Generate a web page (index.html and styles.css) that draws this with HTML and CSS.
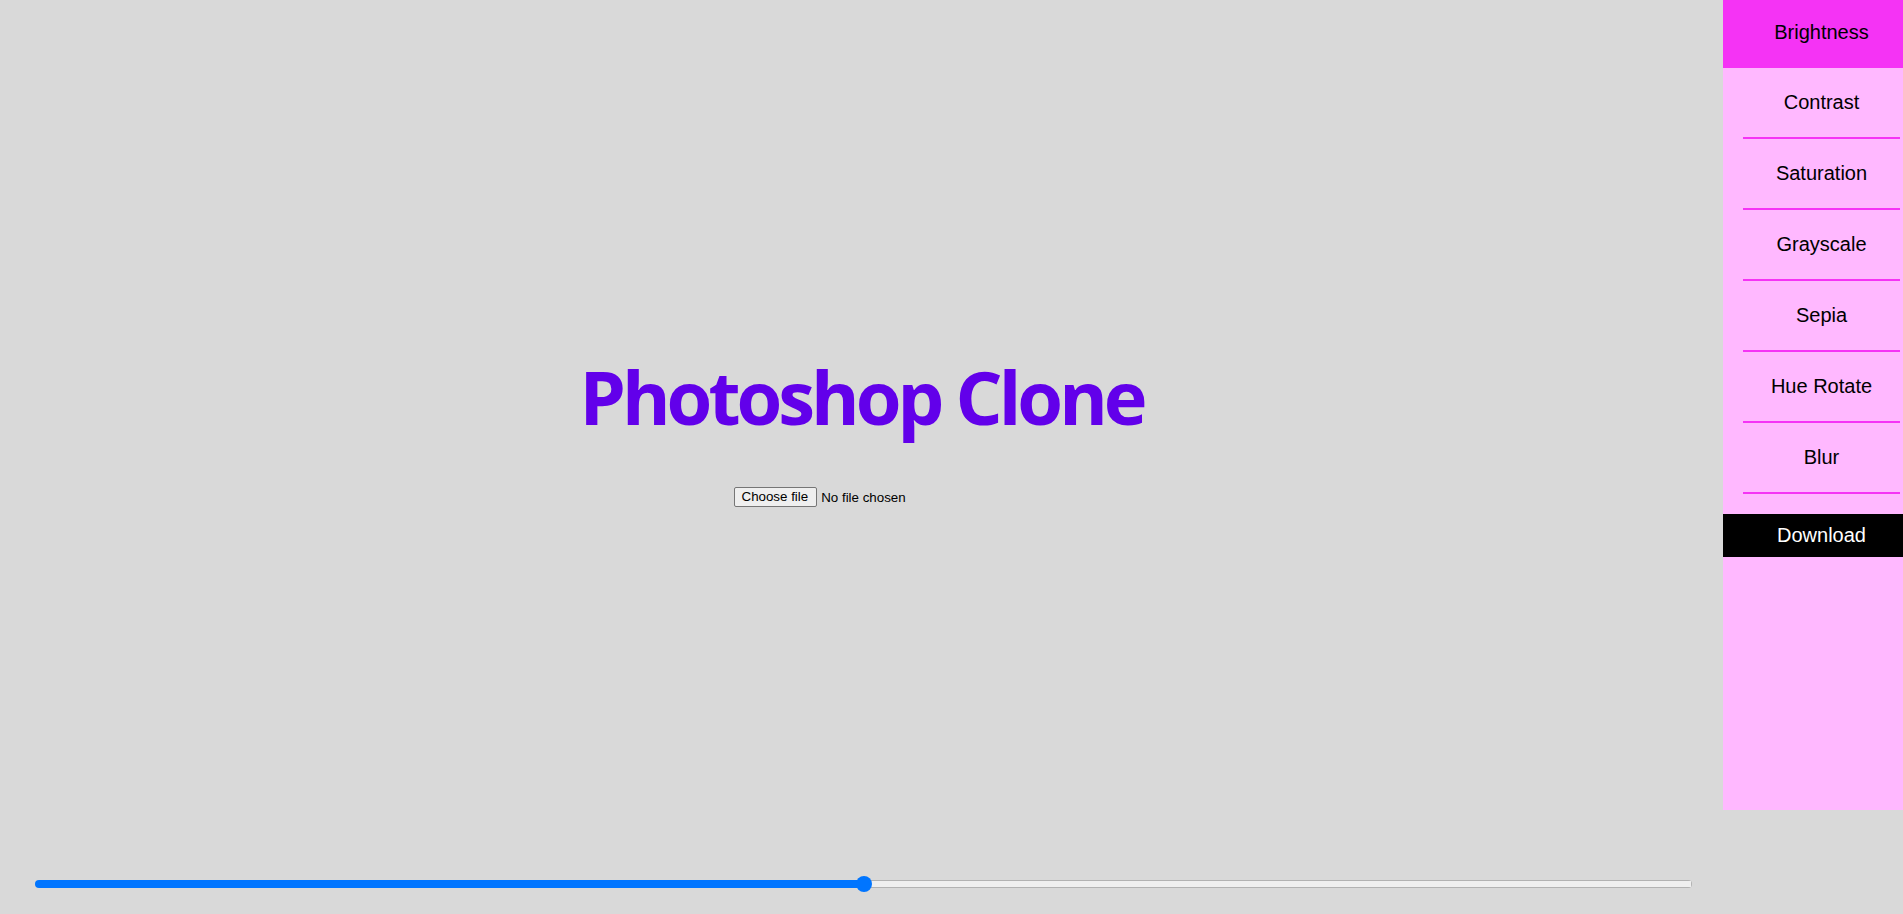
FILE: index.html
```html
<!DOCTYPE html>
<html lang="en">
<head>
<meta charset="utf-8">
<title>Photoshop Clone</title>
<link rel="stylesheet" href="styles.css">
</head>
<body>
<div class="app">
  <div class="workspace">
    <main class="canvas-area">
      <h1 class="title">Photoshop Clone</h1>
      <label class="file-picker">
        <input type="file" class="file-input" accept="image/*">
        <span class="file-btn">Choose file</span>
        <span class="file-name">No file chosen</span>
      </label>
    </main>
    <aside class="sidebar">
      <div class="tool active"><span class="tool-label">Brightness</span></div>
      <div class="tool"><span class="tool-label">Contrast</span></div>
      <div class="tool"><span class="tool-label">Saturation</span></div>
      <div class="tool"><span class="tool-label">Grayscale</span></div>
      <div class="tool"><span class="tool-label">Sepia</span></div>
      <div class="tool"><span class="tool-label">Hue Rotate</span></div>
      <div class="tool"><span class="tool-label">Blur</span></div>
      <button class="download"><span class="tool-label-plain">Download</span></button>
    </aside>
  </div>
  <div class="bottom">
    <input type="range" class="slider" min="0" max="100" value="50">
  </div>
</div>
</body>
</html>
```
FILE: styles.css
```css
html, body {
  margin: 0;
  padding: 0;
}
body {
  background: #d9d9d9;
  font-family: "Liberation Sans", Arial, sans-serif;
  color: #000;
  width: 1903px;
  height: 914px;
  overflow: hidden;
}
.app {
  display: flex;
  flex-direction: column;
}
.workspace {
  display: flex;
  height: 810px;
}
.canvas-area {
  flex: 1;
  display: flex;
  flex-direction: column;
  align-items: center;
  padding-top: 346px;
}
.title {
  margin: 0;
  font-family: "Open Sans", "Noto Sans", sans-serif;
  font-weight: 700;
  font-size: 74px;
  letter-spacing: -4px;
  line-height: normal;
  color: #6200ea;
}
.file-picker {
  margin-top: 40px;
  width: 256px;
  display: flex;
  align-items: center;
  font-family: "Liberation Sans", Arial, sans-serif;
  font-size: 13.33px;
  cursor: pointer;
}
.file-input {
  display: none;
}
.file-btn {
  background: #efefef;
  border: 1px solid #767676;
  border-radius: 2px;
  padding: 1px 8px 1px 7px;
  margin-right: 4px;
  line-height: 16px;
  color: #000;
}
.file-name {
  color: #000;
}
.sidebar {
  width: 180px;
  background: #ffb8ff;
  display: flex;
  flex-direction: column;
}
.tool {
  padding: 0 3px 0 20px;
}
.tool-label {
  height: 69px;
  display: flex;
  align-items: center;
  justify-content: center;
  border-bottom: 2px solid #f533f5;
  font-size: 20px;
}
.tool.active {
  background: #f533f5;
}
.tool.active .tool-label {
  height: 65px;
  padding-bottom: 3px;
  border-bottom: none;
}
.download {
  margin-top: 20px;
  height: 43px;
  border: none;
  background: #000;
  color: #fff;
  padding: 0 3px 0 20px;
  font-family: "Liberation Sans", Arial, sans-serif;
  font-size: 20px;
  display: flex;
  align-items: center;
  justify-content: center;
  cursor: pointer;
}
.bottom {
  padding: 66px 0 0 35px;
}
.slider {
  -webkit-appearance: none;
  appearance: none;
  display: block;
  margin: 0;
  width: 1657px;
  height: 16px;
  background: transparent;
}
.slider::-webkit-slider-runnable-track {
  height: 8px;
  border-radius: 4px;
  background:
    linear-gradient(#0075ff, #0075ff) 0 0 / 50% 100% no-repeat,
    linear-gradient(#efefef, #efefef) 1px 1px / calc(100% - 2px) calc(100% - 2px) no-repeat,
    #b2b2b2;
}
.slider::-webkit-slider-thumb {
  -webkit-appearance: none;
  appearance: none;
  width: 16px;
  height: 16px;
  margin-top: -4px;
  border-radius: 50%;
  background: #0075ff;
  border: none;
}
```
